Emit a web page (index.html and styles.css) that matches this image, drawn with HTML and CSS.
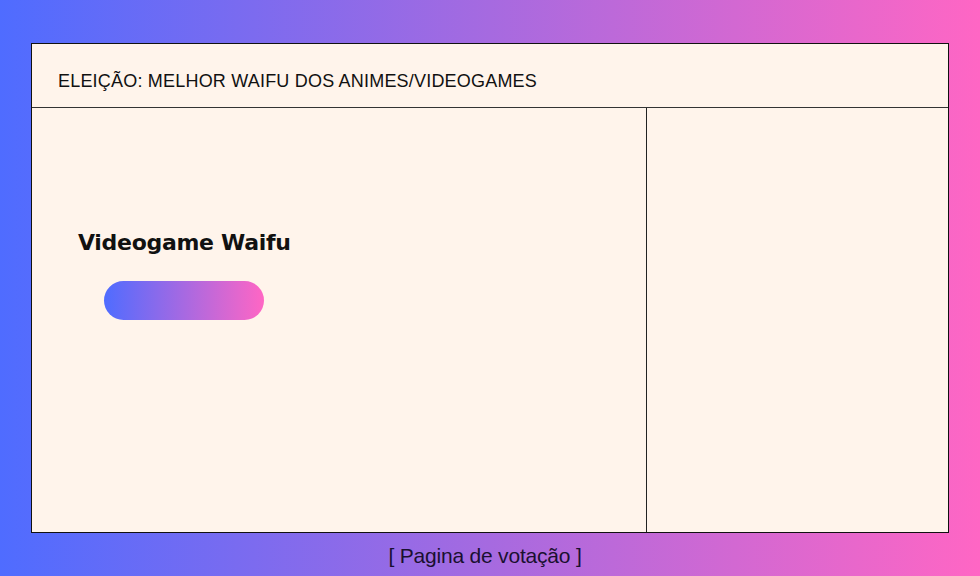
FILE: index.html
```html
<!DOCTYPE html>
<html lang="pt">
<head>
<meta charset="utf-8">
<link rel="stylesheet" href="styles.css">
</head>
<body>
<div class="page">
  <div class="frame">
    <header class="frame-header">ELEIÇÃO: MELHOR WAIFU DOS ANIMES/VIDEOGAMES</header>
    <div class="frame-body">
      <section class="main-col">
        <h1 class="title">Videogame Waifu</h1>
        <div class="pill"></div>
      </section>
      <aside class="side-col"></aside>
    </div>
  </div>
  <p class="caption">[ Pagina de votação ]</p>
</div>
</body>
</html>
```
FILE: styles.css
```css
html, body {
  margin: 0;
  padding: 0;
}
body {
  width: 980px;
  height: 576px;
  overflow: hidden;
  background: linear-gradient(90deg, #4f6cff 0%, #a66ae0 50%, #ff66c4 100%);
  font-family: "Liberation Sans", Arial, sans-serif;
}
.page {
  display: flex;
  flex-direction: column;
  padding: 43px 0 0 31px;
}
.frame {
  width: 916px;
  height: 488px;
  border: 1px solid #111;
  background: #fff4eb;
  display: flex;
  flex-direction: column;
}
.frame-header {
  height: 64px;
  border-bottom: 1px solid #333;
  display: flex;
  align-items: center;
  padding-left: 26px;
  padding-top: 12px;
  box-sizing: border-box;
  font-size: 18px;
  letter-spacing: 0.2px;
  color: #111;
}
.frame-body {
  flex: 1;
  display: flex;
}
.main-col {
  width: 615px;
  border-right: 1px solid #222;
  padding: 122px 0 0 46px;
  box-sizing: border-box;
}
.title {
  margin: 0;
  font-family: "DejaVu Sans", "Liberation Sans", sans-serif;
  font-size: 22px;
  font-weight: 700;
  color: #111;
  letter-spacing: -0.3px;
  line-height: 26px;
}
.pill {
  margin: 25px 0 0 26px;
  width: 160px;
  height: 39px;
  border-radius: 20px;
  background: linear-gradient(90deg, #4f6cff, #ff66c4);
}
.side-col {
  flex: 1;
}
.caption {
  margin: 11px 0 0 0;
  width: 908px;
  text-align: center;
  font-size: 21px;
  color: #1a1030;
  letter-spacing: -0.2px;
}
```
